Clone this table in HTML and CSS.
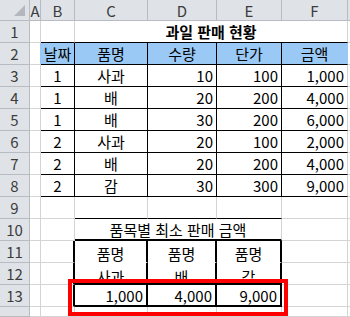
FILE: index.html
```html
<!DOCTYPE html>
<html lang="ko">
<head>
<meta charset="utf-8">
<link rel="stylesheet" href="styles.css">
</head>
<body>
<div class="sheet">
  <div class="sel"></div>
  <!-- header row -->
  <div class="h corner"><span class="tri"></span></div>
  <div class="h col">A</div><div class="h col">B</div><div class="h col">C</div><div class="h col">D</div><div class="h col">E</div><div class="h col">F</div><div class="h col"></div>
  <!-- row 1 -->
  <div class="h row">1</div><div class="c"></div><div class="c bb"></div><div class="c span4 bb title">과일 판매 현황</div><div class="c"></div>
  <!-- row 2 -->
  <div class="h row">2</div><div class="c brblue"></div><div class="c hd bb br">날짜</div><div class="c hd bb br">품명</div><div class="c hd bb br">수량</div><div class="c hd bb br">단가</div><div class="c hd bb brblue">금액</div><div class="c"></div>
  <!-- row 3 -->
  <div class="h row">3</div><div class="c"></div><div class="c ctr bb br">1</div><div class="c ctr bb br">사과</div><div class="c num bb br">10</div><div class="c num bb br">100</div><div class="c num bb">1,000</div><div class="c"></div>
  <!-- row 4 -->
  <div class="h row">4</div><div class="c"></div><div class="c ctr bb br">1</div><div class="c ctr bb br">배</div><div class="c num bb br">20</div><div class="c num bb br">200</div><div class="c num bb">4,000</div><div class="c"></div>
  <!-- row 5 -->
  <div class="h row">5</div><div class="c"></div><div class="c ctr bb br">1</div><div class="c ctr bb br">배</div><div class="c num bb br">30</div><div class="c num bb br">200</div><div class="c num bb">6,000</div><div class="c"></div>
  <!-- row 6 -->
  <div class="h row">6</div><div class="c"></div><div class="c ctr bb br">2</div><div class="c ctr bb br">사과</div><div class="c num bb br">20</div><div class="c num bb br">100</div><div class="c num bb">2,000</div><div class="c"></div>
  <!-- row 7 -->
  <div class="h row">7</div><div class="c"></div><div class="c ctr bb br">2</div><div class="c ctr bb br">배</div><div class="c num bb br">20</div><div class="c num bb br">200</div><div class="c num bb">4,000</div><div class="c"></div>
  <!-- row 8 -->
  <div class="h row">8</div><div class="c"></div><div class="c ctr bb br">2</div><div class="c ctr bb br">감</div><div class="c num bb br">30</div><div class="c num bb br">300</div><div class="c num bb">9,000</div><div class="c"></div>
  <!-- row 9 -->
  <div class="h row">9</div><div class="c"></div><div class="c"></div><div class="c bb"></div><div class="c bb"></div><div class="c bb"></div><div class="c"></div><div class="c"></div>
  <!-- row 10 -->
  <div class="h row">10</div><div class="c"></div><div class="c"></div><div class="c span3 ctr bb2">품목별 최소 판매 금액</div><div class="c"></div><div class="c"></div>
  <!-- row 11 -->
  <div class="h row">11</div><div class="c"></div><div class="c br2"></div><div class="c ctr low1 br2 bbw">품명</div><div class="c ctr low1 br2 bbw">품명</div><div class="c ctr low1 br2 bbw">품명</div><div class="c"></div><div class="c"></div>
  <!-- row 12 -->
  <div class="h row">12</div><div class="c"></div><div class="c br2"></div><div class="c ctr low2 br2 bb2">사과</div><div class="c ctr low2 br2 bb2">배</div><div class="c ctr low2 br2 bb2">감</div><div class="c"></div><div class="c"></div>
  <!-- row 13 -->
  <div class="h row">13</div><div class="c"></div><div class="c br2"></div><div class="c num br2 bb2">1,000</div><div class="c num br2 bb2">4,000</div><div class="c num br2 bb2">9,000</div><div class="c"></div><div class="c"></div>
  <!-- row 14 -->
  <div class="h row"></div><div class="c"></div><div class="c"></div><div class="c"></div><div class="c"></div><div class="c"></div><div class="c"></div><div class="c"></div>
</div>
</body>
</html>
```
FILE: styles.css
```css
html, body {
  margin: 0;
  padding: 0;
  background: #ffffff;
}
.sheet {
  position: relative;
  width: 350px;
  height: 317px;
  overflow: hidden;
  display: grid;
  grid-template-columns: 30px 11px 34px 73px 69px 65px 66px 1fr;
  grid-template-rows: 21px repeat(13, 22px) 1fr;
  font-family: "Noto Sans CJK KR", "Noto Sans", sans-serif;
  font-size: 15px;
  color: #000;
}
.c, .h {
  box-sizing: border-box;
  border-right: 1px solid #d4d4d4;
  border-bottom: 1px solid #d4d4d4;
  display: flex;
  align-items: center;
  white-space: nowrap;
  overflow: hidden;
  line-height: 1;
  padding: 0 3px;
}
.h {
  background: #dfe3e8;
  color: #3c3c3c;
  justify-content: center;
  border-right-color: #b8bcc2;
  border-bottom-color: #b8bcc2;
  padding: 0;
}
.corner {
  position: relative;
}
.tri {
  position: absolute;
  left: 14px;
  top: 5px;
  width: 0;
  height: 0;
  border-left: 11px solid transparent;
  border-bottom: 11px solid #b4b8be;
}
.span4 { grid-column: span 4; }
.span3 { grid-column: span 3; }
.title { justify-content: center; font-weight: bold; }
.ctr { justify-content: center; }
.num { justify-content: flex-end; }
.low1 { padding-top: 4px; }
.low2 { padding-top: 6px; }
.hd {
  background: #9bc9f5;
  justify-content: center;
}
.bb { border-bottom-color: #000; }
.br { border-right-color: #000; }
.brblue { border-right-color: #9bc9f5; }
.bbw { border-bottom-color: #ffffff; }
.bb2 { border-bottom: 2px solid #000; }
.br2 { border-right: 2px solid #000; }
.sel {
  position: absolute;
  left: 68px;
  top: 279px;
  width: 220px;
  height: 37px;
  box-sizing: border-box;
  border: 4px solid #ff0000;
  z-index: 2;
}
```
